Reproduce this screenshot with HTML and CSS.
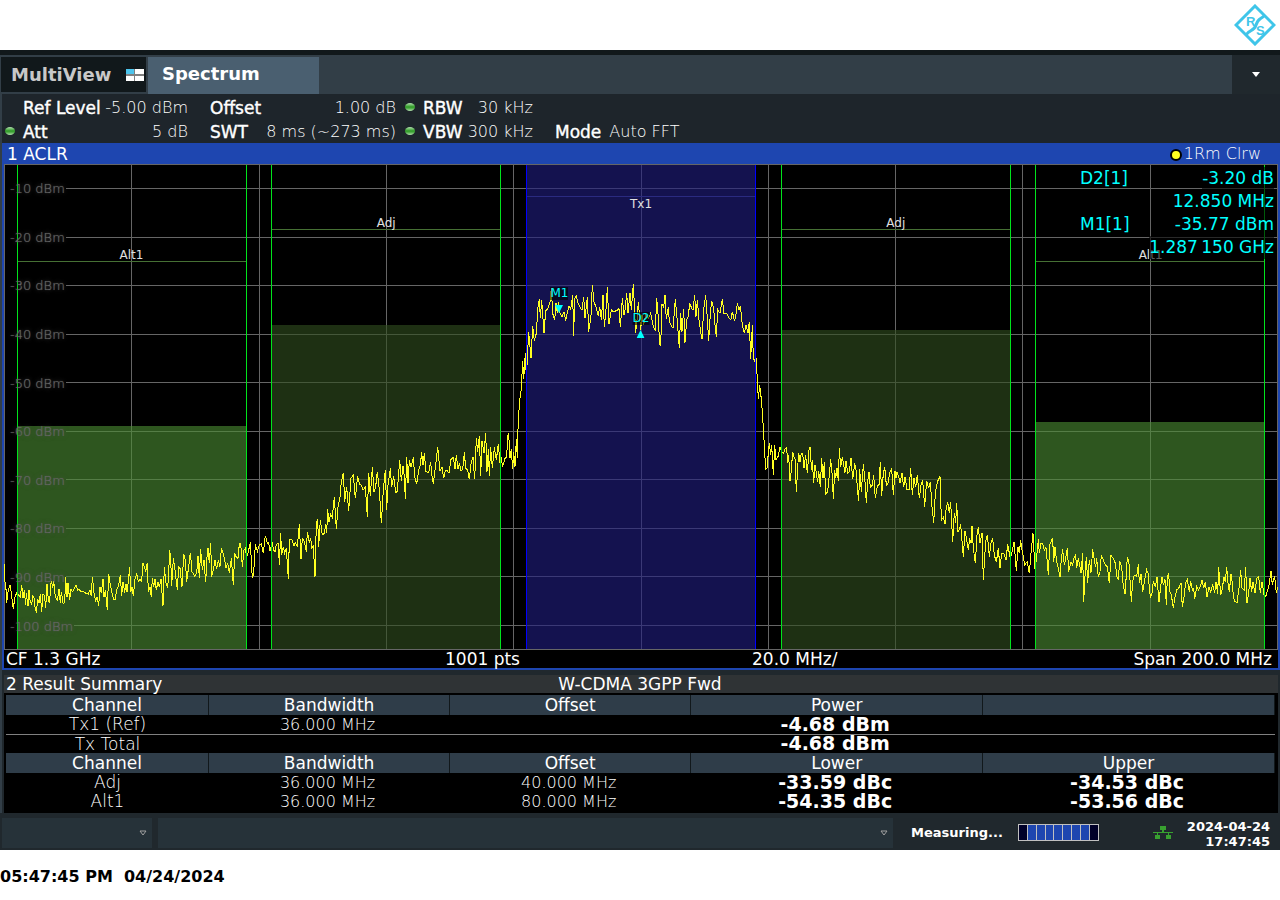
FILE: index.html
```html
<!DOCTYPE html>
<html lang="en">
<head>
<meta charset="utf-8">
<title>Spectrum – ACLR</title>
<link rel="stylesheet" href="styles.css">
</head>
<body>
<header class="brand">
  <svg class="brand-logo" viewBox="0 0 42 42" width="42" height="42" role="img" aria-label="R&amp;S">
    <path d="M21 2 40 21 21 40 2 21Z"/>
    <path d="M12 31C15 25 20 28 22 21C24 14 26 16 31 11"/>
    <text x="12" y="22">R</text>
    <text x="22" y="31">S</text>
  </svg>
</header>

<main class="device">
  <nav class="tabs">
    <button class="tab tab-multi" type="button">MultiView
      <svg width="18" height="12" viewBox="0 0 18 12" shape-rendering="crispEdges" aria-hidden="true">
        <path fill="#808080" d="M0 0h18v12H0z"/>
        <path fill="#fff" d="M9 0h9v5H9zM0 7h8v5H0zM9 7h9v5H9z"/>
        <path fill="#4cc4ec" d="M0 0h8v5H0z"/>
      </svg>
    </button>
    <button class="tab tab-active" type="button">Spectrum</button>
    <button class="tab-menu" type="button" aria-label="Channel list">
      <svg width="8" height="5" viewBox="0 0 8 5" aria-hidden="true"><path fill="#fff" d="M0 0h8L4 5z"/></svg>
    </button>
  </nav>

  <section class="window">
    <dl class="params">
      <div><i></i><dt>Ref Level</dt><dd>-5.00 dBm</dd></div>
      <div class="no-led"><dt>Offset</dt><dd>1.00 dB</dd></div>
      <div><i class="led"></i><dt>RBW</dt><dd>30 kHz</dd></div>
      <div class="no-led"></div>
      <div><i class="led"></i><dt>Att</dt><dd>5 dB</dd></div>
      <div class="no-led"><dt>SWT</dt><dd>8 ms (~273 ms)</dd></div>
      <div><i class="led"></i><dt>VBW</dt><dd>300 kHz</dd></div>
      <div class="no-led mode"><dt>Mode</dt><dd>Auto FFT</dd></div>
    </dl>

    <section class="trace-window">
      <div class="trace-title">
        <h2>1 ACLR</h2>
        <span class="trace-mode"><i></i>1Rm Clrw</span>
      </div>
      <div class="plot">
        <svg class="plot-svg" viewBox="4 164 1274 486" preserveAspectRatio="none" shape-rendering="crispEdges" aria-label="ACLR trace">
          <path class="grid" d="M4.500 164V650M131.500 164V650M259.500 164V650M386.500 164V650M513.500 164V650M641.500 164V650M768.500 164V650M895.500 164V650M1022.500 164V650M1150.500 164V650M1277.500 164V650"/>
          <path class="grid" d="M4 164.500H1278M66 188.500H1278M66 237.500H1278M66 285.500H1278M66 334.500H1278M66 382.500H1278M66 431.500H1278M66 479.500H1278M66 528.500H1278M66 576.500H1278M74 625.500H1278M4 649.500H1278"/>
          <rect class="alt" x="18" y="426" width="228" height="223"/>
          <rect class="adj" x="272" y="325" width="228" height="324"/>
          <rect class="tx" x="527" y="165" width="229" height="484"/>
          <rect class="adj" x="782" y="330" width="228" height="319"/>
          <rect class="alt" x="1036" y="422" width="228" height="227"/>
          <path class="limit" d="M18 261.500H246M272 229.500H500M782 229.500H1010M1036 261.500H1264"/>
          <path class="tx-limit" d="M527 196.500H756"/>
          <g class="trace">
            <polyline transform="translate(0 410) scale(.33333)" points="12,460 14,515 17,518 20,578 24,545 30,525 34,550 40,597 44,565 50,548 56,555 61,562 65,525 69,565 73,541 77,585 79,550 84,588 87,540 90,570 95,586 98,558 102,565 105,590 109,608 113,568 117,580 121,552 125,606 129,552 133,555 137,593 141,523 145,570 149,580 152,520 155,515 158,534 161,512 166,560 172,570 177,538 181,578 184,545 189,580 194,578 197,502 201,562 204,520 209,570 213,538 218,545 224,532 228,524 233,540 237,538 243,545 250,545 258,550 265,552 270,540 274,558 277,500 282,550 287,575 291,560 296,587 300,532 304,550 309,506 312,562 316,540 322,600 326,492 330,520 335,545 341,568 345,570 350,540 356,525 361,496 365,557 369,515 374,548 378,522 381,545 385,515 389,472 392,545 396,532 400,558 405,508 410,490 415,515 420,508 425,513 429,460 433,470 437,485 442,458 445,545 450,530 454,562 457,505 461,530 465,508 469,540 474,515 478,532 483,508 489,587 493,472 498,520 503,535 506,488 509,420 512,445 515,527 520,445 525,480 532,540 536,470 540,475 546,530 551,432 556,450 560,515 566,470 571,428 576,485 584,498 590,490 594,438 598,505 602,418 607,480 612,450 617,517 621,442 624,415 628,460 632,400 635,500 640,480 645,450 650,478 655,450 660,470 664,415 668,425 673,445 678,475 683,460 688,490 694,445 700,524 704,430 708,440 714,445 718,402 722,400 727,470 732,420 736,415 740,440 745,425 751,397 757,505 761,490 766,402 772,425 778,405 784,402 790,430 796,377 802,400 806,398 810,422"/>
            <polyline transform="translate(240 410) scale(.33333)" points="90,422 97,400 101,420 105,425 109,403 115,400 118,465 122,370 125,435 130,410 134,430 139,415 145,507 148,390 156,390 162,408 166,398 172,408 178,343 183,448 187,385 193,395 199,425 202,365 208,398 212,385 216,415 220,408 225,502 229,340 233,328 236,410 241,330 247,375 253,370 257,343 260,370 263,298 267,335 272,312 277,322 283,260 289,358 294,290 300,262 304,215 310,188 314,275 320,230 326,303 333,205 340,195 346,265 353,198 358,222 364,225 369,240 376,232 382,320 386,188 391,258 397,172 402,245 407,230 412,185 418,240 424,338 430,240 436,180 440,300 444,225 451,175 455,232 461,198 467,247 472,245 479,150 484,212 489,168 493,200 496,268 500,142 504,220 508,150 513,170 520,142 524,200 530,222 536,180 541,165 545,127 549,165 553,130 558,185 566,188 572,155 575,190 580,222 585,180 589,150 593,110 600,182 606,172 611,205 616,180 622,182 627,190 633,148 640,142 645,178 649,135 654,178 658,160 663,182 668,178 673,127 677,175 683,180 688,208 694,155 699,142 704,208 709,85 713,125 718,78 722,198 726,92 732,130 737,70 741,185 745,118 748,197 752,112 757,175 763,112 769,150 775,102 780,160 783,142 788,170 795,145 800,140 803,80 806,68 810,145 814,118 818,178 821,125 825,170 829,88 832,143 835,15 837,0"/>
            <polyline transform="translate(500 270) scale(.33333)" points="57,420 60,385 64,355 68,272 71,328 76,250 79,325 83,245 86,185 93,265 98,168 103,212 109,190 114,110 118,88 121,145 125,90 132,190 137,122 144,115 150,95 154,55 158,130 164,150 168,100 172,130 176,95 180,130 186,140 192,125 197,152 202,128 207,108 212,118 218,75 221,197 224,85 229,78 234,98 240,112 246,120 251,80 255,145 262,80 266,185 273,138 277,45 282,95 289,115 295,138 299,110 304,150 309,75 313,170 318,118 322,52 327,163 334,120 340,125 350,122 357,115 361,172 367,85 372,135 376,115 380,68 384,130 390,68 394,120 400,42 407,188 411,150 415,95 422,180 426,135 431,165 437,135 445,145 452,130 460,170 466,182 470,85 474,130 479,222 482,228 486,102 491,112 495,75 499,148 505,110 508,155 513,165 519,175 526,88 531,145 538,233 542,130 546,185 551,118 555,218 560,150 565,140 569,98 575,115 579,120 584,75 588,140 592,90 597,150 602,185 606,208 611,118 617,75 621,130 626,212 631,130 635,92 641,115 645,165 649,202 653,118 660,130 667,88 672,130 680,130 687,145 693,148 697,125 703,150 707,142 712,100 717,120 721,108 727,165 733,190 738,165 744,190 748,155 752,268 757,165 760,265 764,275 767,250 770,290 775,388 779,345 784,388 788,440 792,510 797,598 801,595 804,560 808,518 812,555 815,525 820,615 824,525 828,570 834,560 840,530 845,545"/>
            <polyline transform="translate(750 410) scale(.33333)" points="95,125 100,130 106,115 110,112 113,160 116,135 120,212 124,180 128,125 132,140 135,145 139,247 144,158 146,130 150,155 154,130 158,130 162,175 167,135 172,190 177,120 181,110 184,180 187,150 191,218 195,165 199,190 203,215 206,182 211,232 215,145 219,205 223,155 227,253 233,245 238,195 242,148 247,200 250,268 254,180 257,205 261,175 265,212 268,115 272,170 277,140 281,165 285,188 288,152 293,190 298,185 303,145 308,208 314,160 319,185 322,235 326,272 329,178 334,245 340,163 345,215 349,278 353,215 357,185 361,232 367,225 371,195 376,265 382,228 387,225 391,155 395,257 400,190 404,170 409,225 414,220 420,185 425,175 430,255 435,182 438,205 441,185 446,200 450,220 456,190 461,232 465,200 471,240 477,240 482,175 487,255 492,205 497,232 502,195 508,265 513,225 518,210 524,290 530,212 536,235 541,215 546,290 551,338 556,250 562,215 570,200 574,330 580,322 585,343 588,300 593,275 598,310 602,275 608,395 613,308 617,340 620,278 624,365 629,355 632,343 640,442 645,362 650,388 655,420 659,385 663,400 666,347 670,415 676,460 681,375 685,352 690,400 696,368 700,510 704,440 708,390 712,375 718,440 723,400 728,385 733,435 739,457 745,415 750,475 755,430 762,432 768,450 773,403 781,445 786,425 792,395 799,482 804,412 808,430 812,390 816,420 820,440 824,465 832,455 838,490 843,430 849,370 855,478"/>
            <polyline transform="translate(1000 410) scale(.33333)" points="105,478 110,440 115,388 118,430 123,400 128,402 133,420 138,412 145,495 149,405 155,390 158,385 161,455 165,412 170,455 176,480 180,502 184,445 188,418 193,465 197,445 202,415 206,485 213,455 218,465 223,440 227,435 230,475 235,445 239,465 243,490 248,428 251,575 255,500 259,440 263,518 268,450 273,488 278,418 283,450 287,472 290,445 295,502 300,485 304,435 310,450 316,465 322,470 328,520 333,437 340,445 346,460 351,500 355,510 359,452 365,470 369,520 375,553 378,510 382,440 387,460 394,575 398,515 403,495 410,500 415,463 418,520 423,492 428,545 433,515 440,480 444,490 451,563 456,550 460,512 466,530 471,502 477,575 482,530 486,500 490,525 495,508 499,585 502,500 506,492 510,545 514,555 520,595 525,560 530,540 536,535 543,518 547,592 552,560 557,518 562,508 568,545 572,512 577,540 581,535 584,568 590,530 595,540 601,530 606,510 611,535 616,515 621,562 627,530 632,545 638,525 644,548 648,515 653,552 656,470 662,555 667,535 672,500 676,515 680,470 684,520 688,545 693,492 697,520 700,560 705,575 711,578 717,535 722,480 726,535 733,540 737,472 741,580 746,550 750,505 755,545 759,515 765,550 770,505 776,500 781,550 786,515 792,555 797,560 803,540 808,520 813,482 817,525 824,498 829,550 833,530"/>
          </g>
          <path class="edge" d="M17.500 165V649M246.500 165V649M271.500 165V649M500.500 165V649M781.500 165V649M1010.500 165V649M1035.500 165V649M1264.500 165V649"/>
          <path class="tx-edge" d="M526.500 165V649M755.500 165V649"/>
        </svg>

        <ul class="scale">
          <li>-10 dBm</li><li>-20 dBm</li><li>-30 dBm</li><li>-40 dBm</li><li>-50 dBm</li>
          <li>-60 dBm</li><li>-70 dBm</li><li>-80 dBm</li><li>-90 dBm</li><li>-100 dBm</li>
        </ul>

        <span class="chan chan-alt-lower">Alt1</span>
        <span class="chan chan-adj-lower">Adj</span>
        <span class="chan chan-tx">Tx1</span>
        <span class="chan chan-adj-upper">Adj</span>
        <span class="chan chan-alt-upper">Alt1</span>

        <span class="marker marker-m1"><b>M1</b>
          <svg width="8" height="8" viewBox="0 0 8 8" aria-hidden="true"><path d="M0 0h8L4 8z"/></svg></span>
        <span class="marker marker-d2"><b>D2</b>
          <svg width="8" height="8" viewBox="0 0 8 8" aria-hidden="true"><path d="M0 8h8L4 0z"/></svg></span>

        <dl class="readout">
          <dt>D2[1]</dt><dd><span>-3.20 dB</span></dd>
          <dd><span>12.850 MHz</span></dd>
          <dt>M1[1]</dt><dd><span>-35.77 dBm</span></dd>
          <dd><span>1.287&#8201;150 GHz</span></dd>
        </dl>
      </div>
      <div class="axis">
        <span>CF 1.3 GHz</span><span>1001 pts</span><span>20.0 MHz/</span><span class="axis-span">Span 200.0 MHz</span>
      </div>
    </section>

    <section class="results">
      <div class="results-title"><h2>2 Result Summary</h2><span>W-CDMA 3GPP Fwd</span></div>
      <div class="results-body">
        <table>
          <colgroup><col class="c-channel"><col class="c-freq"><col class="c-freq"><col class="c-power"><col class="c-power"></colgroup>
          <tbody>
            <tr><th>Channel</th><th>Bandwidth</th><th>Offset</th><th>Power</th><th></th></tr>
            <tr class="ruled"><td>Tx1 (Ref)</td><td>36.000 MHz</td><td></td><td class="power">-4.68 dBm</td><td></td></tr>
            <tr class="total"><td>Tx Total</td><td></td><td></td><td class="power">-4.68 dBm</td><td></td></tr>
          </tbody>
          <tbody>
            <tr><th>Channel</th><th>Bandwidth</th><th>Offset</th><th>Lower</th><th>Upper</th></tr>
            <tr><td>Adj</td><td>36.000 MHz</td><td>40.000 MHz</td><td class="power">-33.59 dBc</td><td class="power">-34.53 dBc</td></tr>
            <tr><td>Alt1</td><td>36.000 MHz</td><td>80.000 MHz</td><td class="power">-54.35 dBc</td><td class="power">-53.56 dBc</td></tr>
          </tbody>
        </table>
      </div>
    </section>
  </section>

  <footer class="status">
    <button class="drop drop-short" type="button" aria-label="Instrument messages">
      <svg width="8" height="6" viewBox="0 0 8 6" aria-hidden="true"><path d="M1 1h6L4 5z"/></svg>
    </button>
    <button class="drop drop-long" type="button" aria-label="Error messages">
      <svg width="8" height="6" viewBox="0 0 8 6" aria-hidden="true"><path d="M1 1h6L4 5z"/></svg>
    </button>
    <span class="state">Measuring...</span>
    <div class="progress" role="progressbar" aria-label="Measurement progress">
      <i class="idle"></i><i></i><i></i><i></i><i></i><i></i><i></i><i></i><i class="idle"></i>
    </div>
    <svg class="lan" width="20" height="14" viewBox="0 0 20 14" shape-rendering="crispEdges" role="img" aria-label="LAN connected">
      <path d="M7 0h6v4H7zM9 4h2v2H9zM0 6h20v1H0zM4 7h1v2H4zM15 7h1v2h-1zM2 9h5v4H2zM13 9h5v4h-5z"/>
    </svg>
    <time class="clock" datetime="2024-04-24T17:47:45">2024-04-24<br>17:47:45</time>
  </footer>
</main>

<p class="stamp">05:47:45 PM&nbsp; 04/24/2024</p>
</body>
</html>
```

FILE: styles.css
```css
* { box-sizing: border-box; }

body {
  margin: 0;
  background: #fff;
  color: #fff;
  font: 17px/20px "DejaVu Sans", Verdana, sans-serif;
}

h2, dl, dd, ul, p { margin: 0; padding: 0; font-weight: 400; font-size: inherit; }
ul { list-style: none; }
button { border: 0; padding: 0; color: inherit; font: inherit; }

/* brand strip */
.brand { display: flex; justify-content: flex-end; align-items: center; height: 50px; padding-right: 4px; }
.brand-logo path { fill: none; stroke: #3fc5e9; stroke-width: 3; }
.brand-logo text { fill: #3fc5e9; font: bold 13px "Liberation Sans", Arial, sans-serif; }

.device { background: #20282d; border-top: 5px solid #11181b; }

/* tabs */
.tabs { display: flex; height: 39px; background: #323e47; padding-left: 1px; gap: 2px; }
.tab { font-weight: 700; font-size: 18px; }
.tab-multi {
  display: flex; justify-content: space-between; align-items: center;
  width: 145px; height: 35px; margin-top: 2px; padding: 0 2px 0 10px;
  background: #11181b; color: #c8c8c8;
}
.tab-active { width: 171px; margin-top: 2px; padding: 0 0 4px 14px; background: #4a5f70; text-align: left; }
.tab-menu { width: 48px; margin-left: auto; background: #20282d; display: grid; place-items: center; }

/* measurement window */
.window { border-left: 2px solid #323e47; }

.params {
  display: grid;
  grid-template-columns: 205px 195px 150px auto;
  grid-auto-rows: 24px;
  padding: 1px 0 0 3px;
  background: #1e252b;
  font-size: 16px;
  line-height: 26px;
}
.params div { display: flex; padding-right: 22px; }
.params .no-led { padding-right: 9px; }
.params i { width: 10px; height: 8px; margin: 8px 8px 0 0; }
.params dd { margin-left: auto; font-weight: 200; }
.params .mode dd { margin-left: 8px; }
.params dt { font-size: 17px; -webkit-text-stroke: 0.4px #fff; }
.led { border-radius: 50%; background: linear-gradient(#b4e0b0, #38a030 45%, #38a030 60%, #b4e0b0); }

.trace-window { border: solid #1e46b0; border-width: 0 2px 2px; background: #000; }
.trace-title {
  display: flex; justify-content: space-between;
  height: 21px; padding: 0 17px 0 3px;
  background: #1e46b0; line-height: 23px;
}
.trace-mode { display: flex; align-items: center; gap: 2px; font-size: 16px; font-weight: 200; }
.trace-mode i { width: 12px; height: 12px; margin-top: 2px; border: 2px solid #000; border-radius: 50%; background: #ffff20; }

.plot { position: relative; }
.plot-svg { display: block; width: 100%; height: 486px; }
.plot-svg path, .plot-svg polyline { fill: none; stroke-width: 1; vector-effect: non-scaling-stroke; }
.grid { stroke: #666; }
.alt { fill: rgba(75, 139, 50, 0.62); }
.adj { fill: rgba(48, 77, 30, 0.62); }
.tx { fill: rgba(32, 29, 127, 0.62); }
.limit { stroke: #467034; }
.tx-limit { stroke: #2a2a80; }
.edge { stroke: #00e41c; }
.tx-edge { stroke: #0000ff; }
.trace { stroke: #ffff20; }

.scale { position: absolute; inset: 1px auto -1px 6px; font-size: 13px; color: #666; font-weight: 200; }
.scale li {
  display: flex; align-items: center; height: 10%;
  text-shadow: 0 0 5px #555, 0 0 1px #666;
}

.chan {
  position: absolute; transform: translateX(-50%);
  font-size: 12px; line-height: 16px; color: #e0e0e0;
}
.chan-alt-lower { left: 10%; top: 83px; }
.chan-adj-lower { left: 30%; top: 51px; }
.chan-tx { left: 50%; top: 32px; }
.chan-adj-upper { left: 70%; top: 51px; }
.chan-alt-upper { left: 90%; top: 83px; }

.marker {
  position: absolute; transform: translateX(-50%);
  display: flex; flex-direction: column; align-items: center;
  color: #00ffff; font-size: 12px; line-height: 13px;
}
.marker b { font-weight: 400; background: rgba(0, 0, 0, 0.6); }
.marker svg { margin-top: 5px; fill: #00ffff; }
.marker-m1 { left: 43.6%; top: 123px; }
.marker-d2 { left: 50%; top: 148px; }
.marker svg path { fill: #00ffff; }

.readout {
  position: absolute; top: 3px; right: 4px;
  display: grid; grid-template-columns: 72px 122px; grid-auto-rows: 23px;
  color: #00ffff; line-height: 22px;
}
.readout dd { grid-column: 2; display: flex; justify-content: flex-end; white-space: nowrap; }
.readout span { background: rgba(0, 0, 0, 0.6); }

.axis { display: grid; grid-template-columns: 439fr 307fr 260fr 260fr; padding: 0 6px 0 2px; line-height: 18px; }
.axis-span { text-align: right; }

/* results */
.results { margin: 5px 2px 0; }
.results-title {
  display: grid; grid-template-columns: 1fr auto 1fr;
  padding: 0 4px 0 2px; background: #2f3335; line-height: 18px;
}
.results-body { padding: 2px 3px 2px 2px; background: #000; }
.results table { width: 100%; table-layout: fixed; border-spacing: 0; }
.c-channel { width: 16%; }
.c-freq { width: 19%; }
.c-power { width: 23%; }
.results th { padding: 0; height: 20px; background: #2f3d49; border-right: 1px solid #11181b; font-weight: 400; line-height: 20px; }
.results td { padding: 0 4px 0 0; height: 19px; text-align: center; font-size: 16px; font-weight: 200; line-height: 19px; }
.results td:first-child { padding: 0; font-size: 17px; }
.results .ruled td { height: 20px; border-bottom: 1px solid #808080; }
.results .total td { height: 18px; line-height: 18px; }
.results td.power { padding: 0 4px 2px 0; font-size: 19px; font-weight: 700; line-height: 16px; }

/* status bar */
.status { display: flex; align-items: center; height: 37px; padding: 0 10px 0 2px; }
.drop { display: flex; justify-content: flex-end; align-items: center; height: 30px; margin-top: 3px; padding-right: 5px; background: #263239; }
.drop path { fill: none; stroke: #a0a0a0; }
.drop-short { width: 150px; margin-right: 6px; }
.drop-long { flex: 1; }
.state { margin: 2px 15px 0 18px; font-size: 13px; font-weight: 700; }
.progress { display: flex; gap: 1px; width: 81px; height: 17px; margin-top: 1px; border: 1px solid #c0c0c0; background: #c0c0c0; }
.progress i { flex: 1; background: #1e46b0; }
.progress .idle { background: #000028; }
.lan { margin: 2px 14px 0 54px; fill: #38a030; }
.clock { font-size: 13px; font-weight: 700; line-height: 15px; text-align: right; margin-top: 5px; }

.stamp { padding: 17px 0 13px; color: #000; font-size: 16px; font-weight: 700; }
```
